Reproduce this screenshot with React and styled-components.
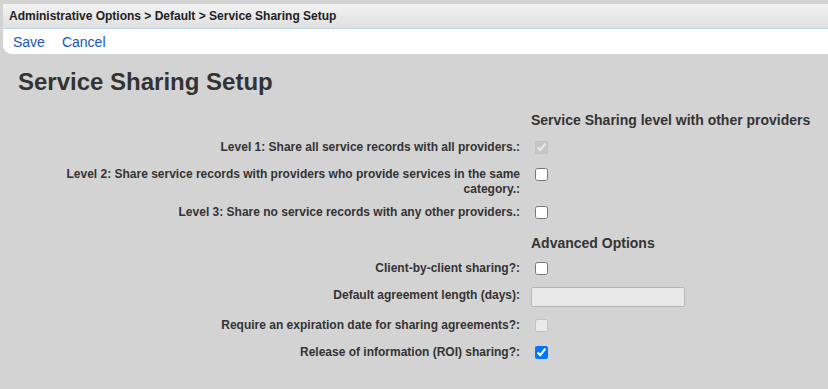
import React from 'react';
import styled, { createGlobalStyle } from 'styled-components';

const GlobalStyle = createGlobalStyle`
    html, body {
        margin: 0;
        padding: 0;
        background: #d3d3d3;
        font-family: 'Liberation Sans', Arial, sans-serif;
        color: #333;
    }
`;

const Page = styled.div`
    padding-top: 4px;
    padding-left: 3px;
    min-height: 385px;
`;

const Breadcrumb = styled.div`
    height: 24px;
    display: flex;
    align-items: center;
    padding-left: 6px;
    background: linear-gradient(#f2f2f2, #e0e0e0);
    border-bottom: 1px solid #b9d3ea;
    font-size: 12px;
    font-weight: bold;
    color: #222;
`;

const Toolbar = styled.div`
    height: 25px;
    display: flex;
    align-items: center;
    gap: 17px;
    padding-left: 10px;
    background: #fff;
    border-radius: 0 0 0 9px;
`;

const ToolLink = styled.a`
    font-size: 14px;
    color: #1b55c0;
    cursor: pointer;
`;

const Title = styled.h1`
    margin: 14px 0 0 15px;
    font-size: 24px;
    line-height: 28px;
    font-weight: bold;
    color: #333;
`;

const Form = styled.div`
    margin-top: 16px;
    display: grid;
    grid-template-columns: 460px 1fr;
    column-gap: 11px;
    padding-left: 57px;
    align-items: start;
    row-gap: 8px;
`;

const SectionHeading = styled.div`
    grid-column: 2;
    font-size: 14px;
    font-weight: bold;
    line-height: 16px;
    margin-top: ${p => p.$top || 0}px;
    margin-bottom: ${p => p.$bottom || 0}px;
`;

const Label = styled.label`
    grid-column: 1;
    text-align: right;
    font-size: 12px;
    font-weight: bold;
    line-height: 15px;
    color: #333;
`;

const Control = styled.div`
    grid-column: 2;
    display: flex;
    align-items: flex-start;
`;

const Check = styled.input.attrs({ type: 'checkbox' })`
    width: 13px;
    height: 13px;
    margin: 1px 3px 5px 4px;
`;

const TextInput = styled.input`
    width: 154px;
    height: 20px;
    box-sizing: border-box;
    margin: -1px 0 3px 0;
    background: #e9e9e9;
    border: 1px solid #b5b5b5;
    border-radius: 2px;
`;

const levels = [
    { label: 'Level 1: Share all service records with all providers.:', checked: true, disabled: true },
    { label: 'Level 2: Share service records with providers who provide services in the same category.:' },
    { label: 'Level 3: Share no service records with any other providers.:' }
];

export default function App() {
    return (
        <Page>
            <GlobalStyle />
            <Breadcrumb>Administrative Options &gt; Default &gt; Service Sharing Setup</Breadcrumb>
            <Toolbar>
                <ToolLink>Save</ToolLink>
                <ToolLink>Cancel</ToolLink>
            </Toolbar>
            <Title>Service Sharing Setup</Title>
            <Form>
                <SectionHeading $bottom={4}>Service Sharing level with other providers</SectionHeading>
                {levels.map(l => (
                    <React.Fragment key={l.label}>
                        <Label>{l.label}</Label>
                        <Control>
                            <Check defaultChecked={l.checked} disabled={l.disabled} />
                        </Control>
                    </React.Fragment>
                ))}
                <SectionHeading $top={3} $bottom={2}>Advanced Options</SectionHeading>
                <Label>Client-by-client sharing?:</Label>
                <Control><Check /></Control>
                <Label>Default agreement length (days):</Label>
                <Control><TextInput type="text" disabled /></Control>
                <Label>Require an expiration date for sharing agreements?:</Label>
                <Control><Check disabled /></Control>
                <Label>Release of information (ROI) sharing?:</Label>
                <Control><Check defaultChecked /></Control>
            </Form>
        </Page>
    );
}
